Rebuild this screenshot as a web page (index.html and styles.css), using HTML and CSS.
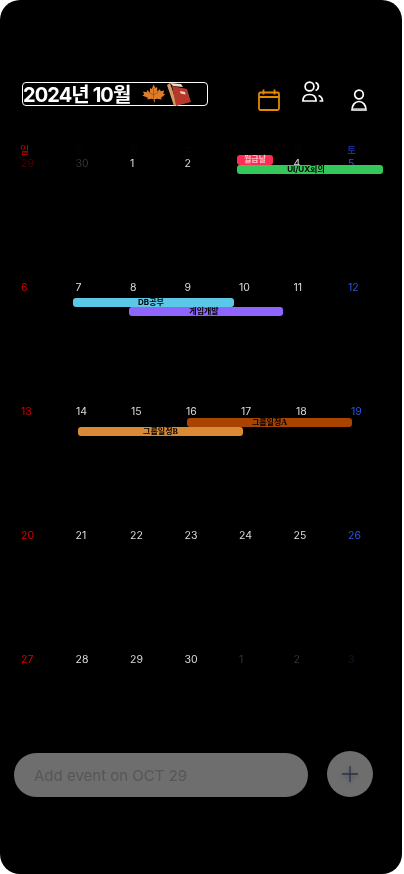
FILE: index.html
```html
<!DOCTYPE html>
<html lang="ko">
<head>
    <meta charset="UTF-8">
    <meta name="viewport" content="width=device-width, initial-scale=1.0">
    <title>Calendar</title>
    <link rel="stylesheet" href="styles.css">
</head>
<body>
    <div class="app">
        <header class="top-bar">
            <div class="month-title">
                <span class="month-text">2024년 10월</span>
                <svg class="leaf-icon" viewBox="0 0 24 20">
                    <path fill="#dd7d2a" d="M12 .5l2 3.600 1.700-1 .1 4.400 2.700-2.500.6 2.200 3.600-.8-1 3.200 1.900 1-4 3.200.5 1.600-4.400-.6-2.400.5.200 3h-.9l.1-3-2.700-.5-4.200.6.500-1.600L.700 11.600l1.900-1-1-3.200 3.600.8.6-2.200 2.700 2.500.1-4.400 1.700 1z"/>
                    <path fill="none" stroke="#8a4410" stroke-width=".6" d="M12 4v13M12 11l-5-3M12 11l5-3"/>
                </svg>
                <svg class="book-icon" viewBox="0 0 24 24">
                    <path fill="#e9d9c4" d="M3 1l11 1 2 3-10-1z"/>
                    <path fill="#d39a63" d="M0 3l3-2 7 21-3 2z"/>
                    <path fill="#b5382a" d="M5 4l15 3 4 13-15 4z"/>
                    <path fill="#e8d6c4" d="M13 9l5 1 .6 2.500-5-1z"/>
                </svg>
            </div>
            <nav class="top-icons">
                <svg class="icon-calendar" viewBox="0 0 22 22" fill="none" stroke="#e58a00" stroke-width="1.800">
                    <rect x="1" y="3.500" width="20" height="17.500" rx="1.500"/>
                    <path d="M1 8h20M5.500 .5v5M16.500 .5v5"/>
                </svg>
                <svg class="icon-people" viewBox="0 0 22 21" fill="none" stroke="#ffffff" stroke-width="1.700">
                    <circle cx="7.500" cy="5.500" r="4.400"/>
                    <path d="M.9 20c0-4 2.600-6.500 6.600-6.500s6.600 2.500 6.600 6.500z"/>
                    <path d="M13.500 1.500a4.200 4.200 0 0 1 0 8M16.500 14.500c2.500 1 4 3 4 5.500h-3"/>
                </svg>
                <svg class="icon-person" viewBox="0 0 16 22" fill="none" stroke="#ffffff" stroke-width="1.700">
                    <circle cx="8" cy="5.500" r="4.300"/>
                    <path d="M1 21c0-5 3-8.500 7-8.500s7 3.500 7 8.500z"/>
                    <path stroke="#c8c8c8" stroke-width="2.400" d="M1.500 20.500h13"/>
                </svg>
            </nav>
        </header>

        <div class="week-labels">
            <span class="sun">일</span>
            <span class="hidden-label">월</span>
            <span class="hidden-label">화</span>
            <span class="hidden-label">수</span>
            <span class="hidden-label">목</span>
            <span class="hidden-label">금</span>
            <span class="sat-label">토</span>
        </div>

        <section class="calendar">
            <div class="week week-first">
                <span class="sun-out">29</span>
                <span class="out">30</span>
                <span>1</span>
                <span>2</span>
                <span>3</span>
                <span>4</span>
                <span class="sat">5</span>
                <div class="event ev-pay">월급날</div>
                <div class="event ev-uiux">UI/UX회의</div>
            </div>
            <div class="week">
                <span class="sun">6</span>
                <span>7</span>
                <span>8</span>
                <span>9</span>
                <span>10</span>
                <span>11</span>
                <span class="sat">12</span>
                <div class="event ev-db">DB공부</div>
                <div class="event ev-game">게임개발</div>
            </div>
            <div class="week week-wide">
                <span class="sun">13</span>
                <span>14</span>
                <span>15</span>
                <span>16</span>
                <span>17</span>
                <span>18</span>
                <span class="sat">19</span>
                <div class="event serif ev-group-a">그룹일정A</div>
                <div class="event serif ev-group-b">그룹일정B</div>
            </div>
            <div class="week">
                <span class="sun">20</span>
                <span>21</span>
                <span>22</span>
                <span>23</span>
                <span>24</span>
                <span>25</span>
                <span class="sat">26</span>
            </div>
            <div class="week">
                <span class="sun">27</span>
                <span>28</span>
                <span>29</span>
                <span>30</span>
                <span class="out">1</span>
                <span class="out">2</span>
                <span class="sat-out">3</span>
            </div>
        </section>

        <footer class="add-bar">
            <input class="add-input" type="text" placeholder="Add event on OCT 29">
            <button class="add-button" type="button">
                <svg viewBox="0 0 18 18" fill="none" stroke="#2b3048" stroke-width="1.300">
                    <path d="M9 1v16M1 9h16"/>
                </svg>
            </button>
        </footer>
    </div>
</body>
</html>
```

FILE: styles.css
```css
/* Global Styles */
* {
    margin: 0;
    padding: 0;
    box-sizing: border-box;
}
body {
    font-family: 'Inter', 'Noto Sans CJK KR', sans-serif;
    background: #ffffff;
}
.app {
    width: 402px;
    height: 874px;
    background: #000000;
    border-radius: 20px;
    overflow: hidden;
    will-change: opacity;
}

/* Header */
.top-bar {
    display: flex;
    height: 139px;
    padding: 81px 0 0 22px;
}
.month-title {
    display: flex;
    align-items: center;
    width: 186px;
    height: 24px;
    margin-top: 1px;
    border: 1px solid #ffffff;
    border-radius: 4px;
}
.month-text {
    width: 118px;
    margin-top: -2px;
    font-size: 20px;
    font-weight: 700;
    letter-spacing: -0.9px;
    color: #ffffff;
    white-space: nowrap;
}
.leaf-icon {
    width: 25px;
    height: 20px;
}
.book-icon {
    width: 24px;
    height: 24px;
    margin-left: 1px;
}
.top-icons {
    display: flex;
    align-items: flex-start;
    margin-left: 50px;
}
.icon-calendar {
    width: 22px;
    height: 22px;
    margin-top: 8px;
}
.icon-people {
    width: 22px;
    height: 21px;
    margin-left: 22px;
}
.icon-person {
    width: 16px;
    height: 22px;
    margin-top: 8px;
    margin-left: 27px;
}

/* Calendar */
.week-labels {
    display: grid;
    grid-template-columns: repeat(6, 54.5px) auto;
    height: 18px;
    padding: 4px 0 0 20px;
    font-size: 10px;
    line-height: 14px;
}
.hidden-label {
    color: #060606;
}
.sat-label {
    color: #1f3bb0;
}
.week {
    position: relative;
    display: grid;
    grid-template-columns: repeat(7, 54.5px);
    align-content: start;
    height: 124px;
    padding-left: 21px;
    font-size: 10.5px;
    line-height: 13px;
    color: #dcdcdc;
}
.week-wide {
    grid-template-columns: repeat(7, 55px);
}
.sun {
    color: #d80000;
}
.sat {
    color: #2b55e0;
}
.out {
    color: #333333;
}
.sun-out {
    color: #4a0000;
}
.sat-out {
    color: #10142e;
}

/* Event bars */
.event {
    position: absolute;
    height: 9px;
    border-radius: 3px;
    font-size: 8px;
    font-weight: 700;
    line-height: 9px;
    text-align: center;
    color: #000000;
    white-space: nowrap;
}
.serif {
    font-family: 'Liberation Serif', 'Noto Sans CJK KR', serif;
}
.ev-pay {
    top: -2px;
    left: 237px;
    width: 36px;
    height: 10px;
    background: #ff2d55;
    color: #ffc0cc;
}
.ev-uiux {
    top: 8px;
    left: 237px;
    width: 146px;
    padding-right: 8px;
    background: #34c759;
}
.ev-db {
    top: 17px;
    left: 73px;
    width: 161px;
    padding-right: 5px;
    background: #5ac8e6;
}
.ev-game {
    top: 26px;
    left: 129px;
    width: 154px;
    padding-right: 4px;
    background: #8e66ff;
}
.ev-group-a {
    top: 13px;
    left: 187px;
    width: 165px;
    background: #a84400;
}
.ev-group-b {
    top: 22px;
    left: 78px;
    width: 165px;
    background: #d98a35;
}

/* Add event bar */
.add-bar {
    display: flex;
    align-items: flex-start;
    margin-top: -26px;
    padding-left: 14px;
}
.add-input {
    width: 294px;
    height: 44px;
    margin-top: 2px;
    padding-left: 20px;
    border: none;
    border-radius: 22px;
    outline: none;
    background: #6e6e6e;
    font-family: 'Inter', sans-serif;
    font-size: 15px;
}
.add-input::placeholder {
    color: #565656;
    opacity: 1;
}
.add-button {
    display: flex;
    align-items: center;
    justify-content: center;
    width: 46px;
    height: 46px;
    margin-left: 19px;
    border: none;
    border-radius: 50%;
    background: #6e6e6e;
}
.add-button svg {
    width: 18px;
    height: 18px;
    filter: drop-shadow(0 2px 2px rgba(0, 0, 0, 0.25));
}
```
